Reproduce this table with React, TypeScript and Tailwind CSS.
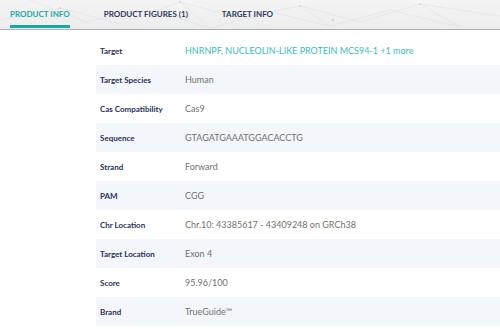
import React from 'react';

const rows: { label: string; value: string; link?: boolean }[] = [
  { label: 'Target', value: 'HNRNPF, NUCLEOLIN-LIKE PROTEIN MCS94-1 +1 more', link: true },
  { label: 'Target Species', value: 'Human' },
  { label: 'Cas Compatibility', value: 'Cas9' },
  { label: 'Sequence', value: 'GTAGATGAAATGGACACCTG' },
  { label: 'Strand', value: 'Forward' },
  { label: 'PAM', value: 'CGG' },
  { label: 'Chr Location', value: 'Chr.10: 43385617 - 43409248 on GRCh38' },
  { label: 'Target Location', value: 'Exon 4' },
  { label: 'Score', value: '95.96/100' },
  { label: 'Brand', value: 'TrueGuide™' },
];

const NetworkBg = () => (
  <svg className="absolute inset-0 w-full h-full" viewBox="0 0 500 29" preserveAspectRatio="none">
    <g stroke="#dedede" strokeWidth="0.5" fill="none">
      <path d="M0 20 L60 8 L120 24 L180 2 L240 18 L300 6 L360 22 L420 4 L500 16" />
      <path d="M30 0 L85 22 L150 10 L210 28 L270 12 L330 26 L390 10 L460 27" />
      <path d="M60 8 L85 22 M180 2 L210 28 M300 6 L330 26 M420 4 L460 27" />
    </g>
    <g fill="#d4d4d4">
      <circle cx="60" cy="8" r="1" />
      <circle cx="180" cy="2" r="1" />
      <circle cx="300" cy="6" r="1" />
      <circle cx="333" cy="20" r="1.2" />
      <circle cx="420" cy="4" r="1" />
    </g>
  </svg>
);

export default function App() {
  return (
    <div className="w-[500px] h-[329px] bg-white overflow-hidden font-['Lato','Liberation_Sans',sans-serif]">
      {/* Tabs */}
      <div className="relative h-[30px] bg-gradient-to-b from-[#f4f4f4] to-[#ededed] border-b border-[#a9aebb]">
        <NetworkBg />
        <div className="relative flex h-full pl-[10px] gap-[34px] text-[8px] font-bold">
          <div className="relative h-full pt-[8px] text-[#1eaaa6]">
            PRODUCT INFO
            <div className="absolute left-0 right-0 bottom-[1px] h-[3px] bg-[#13aaa5]" />
          </div>
          <div className="pt-[8px] text-[#2e3a5c]">PRODUCT FIGURES (1)</div>
          <div className="pt-[8px] text-[#2e3a5c]">TARGET INFO</div>
        </div>
      </div>

      {/* Spec table */}
      <div className="pl-[96px] pt-[6px]">
        {rows.map((r, i) => (
          <div
            key={r.label}
            className={`flex items-center h-[29px] ${i % 2 === 1 ? 'bg-[#f3f6fa]' : 'bg-white'}`}
          >
            <div className="w-[89px] pl-[4px] text-[8px] font-bold text-[#26325a]">{r.label}</div>
            <div className={`text-[9px] ${r.link ? 'text-[#3bbcbc]' : 'text-[#727272]'}`}>{r.value}</div>
          </div>
        ))}
      </div>
    </div>
  );
}
